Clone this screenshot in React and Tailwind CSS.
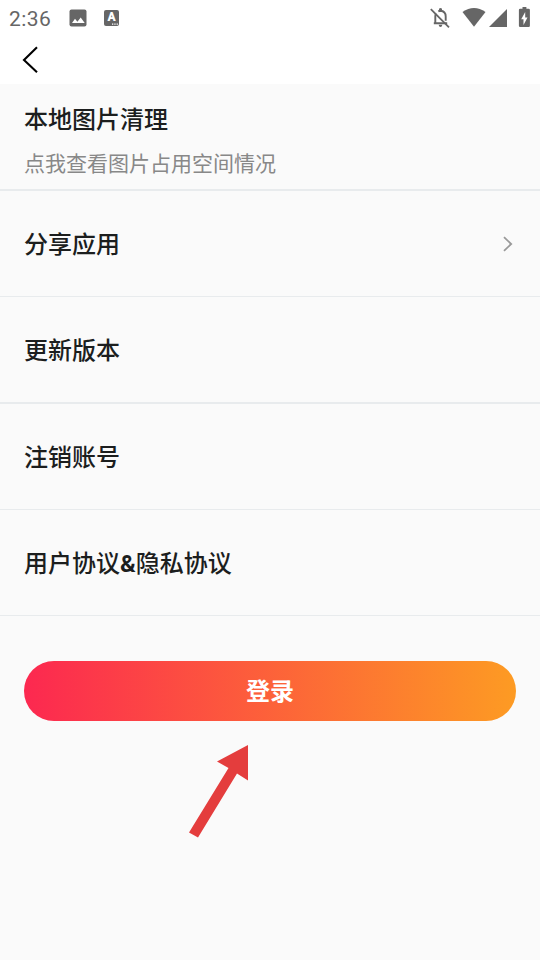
import { useState } from "react";

const menuItems = [
  { id: "share", label: "分享应用", arrow: true, style: "h-[106px] border-b" },
  { id: "update", label: "更新版本", arrow: false, style: "h-[107px] border-b-2" },
  { id: "cancel", label: "注销账号", arrow: false, style: "h-[106px] border-b" },
  {
    id: "terms",
    label: (
      <>
        用户协议<span className="font-bold">&amp;</span>隐私协议
      </>
    ),
    arrow: false,
    style: "h-[106px] border-b",
  },
];

function StatusBar() {
  return (
    <div className="flex h-9 items-center justify-between text-[#666666]">
      <div className="flex items-center pl-[9px]">
        <span className="w-[60px] pt-0.5 font-['Roboto',sans-serif] text-[21px] leading-6 tracking-[0.4px]">
          2:36
        </span>
        {/* Picture notification */}
        <svg width="18" height="18" viewBox="0 0 18 18">
          <rect x="0.5" y="0.5" width="17" height="17" rx="2" fill="currentColor" />
          <path d="M3 14l3-4.2 2.4 2.9 3.3-4.2 4 5.5z" fill="#fff" />
        </svg>
        {/* Keyboard notification */}
        <div className="relative ml-[17px] h-4 w-[15px] rounded-[2px] bg-[#666666]">
          <span className="absolute left-0 top-[2px] w-full text-center font-['Roboto',sans-serif] text-[12px] font-black leading-[11px] text-white">
            A
          </span>
          <svg width="15" height="16" viewBox="0 0 15 16" className="absolute left-0 top-0">
            <path d="M8 13.5h1.3v1.3H8zM10.3 13.5h1.3v1.3h-1.3zM12.6 13.5h1.3v1.3h-1.3z" fill="#fff" />
          </svg>
        </div>
      </div>

      <svg width="111" height="36" viewBox="0 0 111 36" fill="none">
        {/* Muted bell */}
        <path
          d="M4.8 23.3h13.4M6.3 23v-6.8q0-1.5.8-2.8M9.3 11.4q1-.6 2.2-.6 5.2.4 5.2 5.8v4.2"
          stroke="currentColor"
          strokeWidth="1.9"
        />
        <path d="M10 11V8.8q1.5-1.5 3 0V11zM9.6 24.7h3.8q-.4 2.3-1.9 2.3t-1.9-2.3z" fill="currentColor" />
        <path d="M1.8 9.2L20 27.3" stroke="currentColor" strokeWidth="1.8" />
        {/* Wifi, signal and battery */}
        <path d="M33.5 12Q45 3.8 56.5 12L45 26.8z" fill="currentColor" />
        <path d="M78 9v18H60z" fill="currentColor" />
        <path
          d="M93.5 8.8H91.1q-1.2 0-1.2 1.2V25.8q0 1.2 1.2 1.2h8.6q1.2 0 1.2-1.2V10q0-1.2-1.2-1.2H97.4V7h-3.9z"
          fill="currentColor"
        />
        <path d="M96.2 12l-4 7.2h2.3V25l4-7.5h-2.3z" fill="#fff" />
      </svg>
    </div>
  );
}

function MenuItem({ item }) {
  return (
    <button
      type="button"
      className={`flex w-full items-center justify-between border-[#e8ebed] pl-6 pr-[26px] text-left ${item.style}`}
    >
      <span className="pt-0.5 text-2xl font-medium">{item.label}</span>
      {item.arrow && (
        <svg width="12" height="18" viewBox="0 0 12 18" fill="none">
          <path d="M2 2.2L9.2 9 2 15.8" stroke="#999" strokeWidth="1.8" />
        </svg>
      )}
    </button>
  );
}

function App() {
  const [loading, setLoading] = useState(false);

  return (
    <div className="h-[960px] w-[540px] overflow-hidden bg-[#fafafa] font-['Roboto','Noto_Sans_CJK_SC',sans-serif] text-[#1c1e1e]">
      <header className="h-[84px] bg-white">
        <StatusBar />
        <button type="button" className="flex h-12 items-center pl-[21px]" aria-label="返回">
          <svg width="20" height="28" viewBox="0 0 20 28" fill="none">
            <path d="M16 1.3L3 14 16 26.2" stroke="#000" strokeWidth="2.1" />
          </svg>
        </button>
      </header>

      <main>
        <button
          type="button"
          className="flex h-[107px] w-full flex-col items-start border-b-2 border-[#e8ebed] px-6 pt-[18px] text-left"
        >
          <span className="text-2xl font-medium leading-9">本地图片清理</span>
          <span className="mt-2.5 text-[21px] leading-8 text-[#888888]">点我查看图片占用空间情况</span>
        </button>

        {menuItems.map((item) => (
          <MenuItem key={item.id} item={item} />
        ))}

        <div className="px-6 pt-[45px]">
          <button
            type="button"
            disabled={loading}
            onClick={() => setLoading(true)}
            className="h-[60px] w-full rounded-full bg-linear-to-r/srgb from-[#fc2850] to-[#fd9b23] pt-0.5 text-2xl font-bold text-white"
          >
            登录
          </button>
        </div>

        {/* Arrow pointing at the login button */}
        <svg width="60" height="94" viewBox="0 0 60 94" className="ml-[189px] mt-6">
          <path d="M59 0v35.5l-11-7L9 92.5 0 87.5 39.5 23 28 16.5z" fill="#e43d3d" />
        </svg>
      </main>
    </div>
  );
}

export default App;
